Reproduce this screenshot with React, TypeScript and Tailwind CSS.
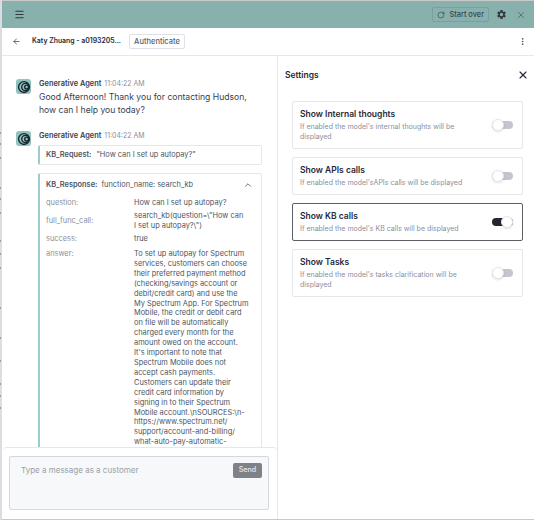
import React from 'react';
import { ArrowLeft, ChevronUp, EllipsisVertical, Menu, RotateCw, X } from 'lucide-react';
import { MdSettings } from 'react-icons/md';

const settings = [
  { title: 'Show Internal thoughts', text: "If enabled the model's internal thoughts will be displayed", on: false },
  { title: 'Show APIs calls', text: "If enabled the model'sAPIs calls will be displayed", on: false },
  { title: 'Show KB calls', text: "If enabled the model's KB calls will be displayed", on: true },
  { title: 'Show Tasks', text: "If enabled the model's tasks clarification will be displayed", on: false },
];

const answer = [
  'To set up autopay for Spectrum',
  'services, customers can choose',
  'their preferred payment method',
  '(checking/savings account or',
  'debit/credit card) and use the',
  'My Spectrum App. For Spectrum',
  'Mobile, the credit or debit card',
  'on file will be automatically',
  'charged every month for the',
  'amount owed on the account.',
  "It's important to note that",
  'Spectrum Mobile does not',
  'accept cash payments.',
  'Customers can update their',
  'credit card information by',
  'signing in to their Spectrum',
  'Mobile account.\\nSOURCES:\\n-',
  'https://www.spectrum.net/',
  'support/account-and-billing/',
  'what-auto-pay-automatic-',
];

// bits of the page underneath that peek out at the left edge
const edgeMarks = [132, 143, 157, 187, 198, 212, 240, 253, 267, 307, 337, 360, 383, 395, 407];

const AgentLogo = () => (
  <div className="flex h-[15px] w-[15px] shrink-0 items-center justify-center rounded-[3px] bg-[#8fc4c0]">
    <svg viewBox="0 0 16 16" className="h-[14px] w-[14px]" fill="none" stroke="#1c262b" strokeWidth="1.6">
      <circle cx="8" cy="8" r="6.2" />
      <circle cx="9.6" cy="8" r="4.2" />
      <circle cx="11" cy="8" r="2.2" />
    </svg>
  </div>
);

const AgentHeader = () => (
  <div className="flex items-baseline gap-[3px] leading-[10px]">
    <span className="text-[7.4px] font-semibold text-[#374151]">Generative Agent</span>
    <span className="text-[7px] text-[#8b8f9a]">11:04:22 AM</span>
  </div>
);

const Row = ({ label, children }: { label: string; children: React.ReactNode }) => (
  <div className="flex items-center">
    <div className="w-[88px] shrink-0 text-[#8b8f9a]">{label}</div>
    <div className="whitespace-nowrap text-[#4b5563]">{children}</div>
  </div>
);

const Toggle = ({ on }: { on: boolean }) => (
  <div className={`flex h-[8px] w-[21px] shrink-0 items-center rounded-full ${on ? 'justify-end bg-[#23272e]' : 'justify-start bg-[#c3c6cf]'}`}>
    <div className="h-[12px] w-[12px] rounded-full border border-[#e5e7eb] bg-white shadow-sm" />
  </div>
);

export default function App() {
  return (
    <div className="flex h-[520px] w-[534px] overflow-hidden bg-white font-['Inter',sans-serif]">
      <div className="relative w-[2px] shrink-0 bg-[#dcdde0]">
        {edgeMarks.map((y) => (
          <span key={y} className="absolute left-0 h-[2px] w-px bg-[#9a9da4]" style={{ top: y }} />
        ))}
      </div>
      <div className="flex min-w-0 flex-1 flex-col">
        <div className="h-px shrink-0 bg-[#c9c9c9]" />
        {/* Top bar */}
        <div className="flex h-[27px] shrink-0 items-center bg-[#88b1ad] pl-[12px] pr-[8px] text-[#2f3a40]">
          <Menu className="h-[11px] w-[11px]" strokeWidth={2.2} />
          <div className="ml-auto flex h-[15px] items-center gap-[4px] rounded-[2px] border border-[#78a09c] px-[4px] text-[7.4px] font-medium text-[#39474b]">
            <RotateCw className="h-[8px] w-[8px]" />
            Start over
          </div>
          <MdSettings className="ml-[7px] h-[11px] w-[11px]" />
          <X className="ml-[9px] h-[10px] w-[10px] text-[#51666a]" />
        </div>
        {/* Sub header */}
        <div className="flex h-[28px] shrink-0 items-center border-b border-[#e5e7eb] pl-[10px] pr-[7px]">
          <ArrowLeft className="h-[9px] w-[9px] text-[#374151]" />
          <span className="ml-[11px] text-[6.9px] font-semibold text-[#1f2937]">Katy Zhuang - a0193205...</span>
          <div className="ml-[8px] flex h-[15px] items-center rounded-[2px] border border-[#dfe1e8] px-[4px] text-[7.5px] font-medium text-[#5b6170]">Authenticate</div>
          <EllipsisVertical className="ml-auto h-[9px] w-[9px] text-[#374151]" />
        </div>
        <div className="flex min-h-0 flex-1 border-b border-[#c5c9d6]">
          {/* Conversation */}
          <div className="relative w-[275px] shrink-0 overflow-hidden">
            <div className="pl-[14px] pr-[15px] pt-[23px]">
              <div className="flex gap-[8px]">
                <AgentLogo />
                <div>
                  <AgentHeader />
                  <p className="mt-[2px] whitespace-nowrap text-[8.6px] leading-[12.5px] text-[#374151]">
                    Good Afternoon! Thank you for contacting Hudson,
                    <br />
                    how can I help you today?
                  </p>
                </div>
              </div>
              <div className="mt-[15px] flex gap-[7px]">
                <AgentLogo />
                <div className="min-w-0 flex-1">
                  <div className="pl-px">
                    <AgentHeader />
                  </div>
                  <div className="mt-[4px] flex h-[20px] items-center rounded-[2px] border border-l-[2px] border-[#e5e7eb] border-l-[#9ccbc8] pl-[6px] text-[7.4px] text-[#4b5563]">
                    <span className="font-semibold">KB_Request:</span>
                    <span className="ml-[5px]">"How can I set up autopay?"</span>
                  </div>
                  <div className="mt-[8px] rounded-[2px] border border-l-[2px] border-[#e5e7eb] border-l-[#9ccbc8] pb-[40px] pl-[6px] pr-[8px] text-[7.4px] leading-[10px]">
                    <div className="flex h-[21px] items-center text-[#4b5563]">
                      <span className="font-semibold">KB_Response:</span>
                      <span className="ml-[4px]">function_name: search_kb</span>
                      <ChevronUp className="ml-auto h-[10px] w-[10px]" />
                    </div>
                    <div className="mt-[3px] flex flex-col gap-[3px]">
                      <Row label="question:">How can I set up autopay?</Row>
                      <Row label="full_func_call:">
                        search_kb(question=\"How can
                        <br />
                        I set up autopay?\")
                      </Row>
                      <Row label="success:">true</Row>
                      <div className="flex pt-[2px]">
                        <div className="w-[88px] shrink-0 text-[#8b8f9a]">answer:</div>
                        <div className="whitespace-nowrap leading-[9.9px] text-[#4b5563]">
                          {answer.map((line) => (
                            <div key={line}>{line}</div>
                          ))}
                        </div>
                      </div>
                    </div>
                  </div>
                </div>
              </div>
            </div>
            {/* Composer */}
            <div className="absolute bottom-0 left-[1px] right-0 h-[72px] rounded-t-[4px] border-t border-[#e5e7eb] bg-white pl-[6px] pr-[8px] pt-[8px]">
              <div className="flex h-[54px] items-start rounded-[2px] border border-[#d3d7e0] bg-[#f7f8fa] pl-[11px] pr-[6px] pt-[6px]">
                <span className="mt-px text-[8px] leading-[12px] text-[#9a9ea8]">Type a message as a customer</span>
                <div className="ml-auto flex h-[15px] w-[29px] items-center justify-center rounded-[2px] bg-[#7e8288] text-[7.2px] font-medium text-[#e5e7eb]">Send</div>
              </div>
            </div>
          </div>
          {/* Settings */}
          <div className="flex-1 border-l border-[#e5e7eb] pl-[7px] pr-[5px]">
            <div className="flex h-[38px] items-center text-[#1f2937]">
              <span className="text-[8.5px] font-semibold">Settings</span>
              <X className="ml-auto h-[12px] w-[12px]" strokeWidth={2.2} />
            </div>
            <div className="ml-[7px] mr-[6px] mt-[7px] flex flex-col gap-[8px]">
              {settings.map((s) => (
                <div key={s.title} className={`flex items-center justify-between rounded-[2px] border py-[6px] pl-[7px] pr-[9px] ${s.on ? 'border-[#5b5f66]' : 'border-[#e5e7eb]'}`}>
                  <div className="w-[170px]">
                    <div className="text-[8.5px] font-semibold leading-[12px] text-[#1f2937]">{s.title}</div>
                    <div className="mt-[2px] text-[7px] leading-[10px] text-[#8b8f9a]">{s.text}</div>
                  </div>
                  <Toggle on={s.on} />
                </div>
              ))}
            </div>
          </div>
        </div>
      </div>
    </div>
  );
}
